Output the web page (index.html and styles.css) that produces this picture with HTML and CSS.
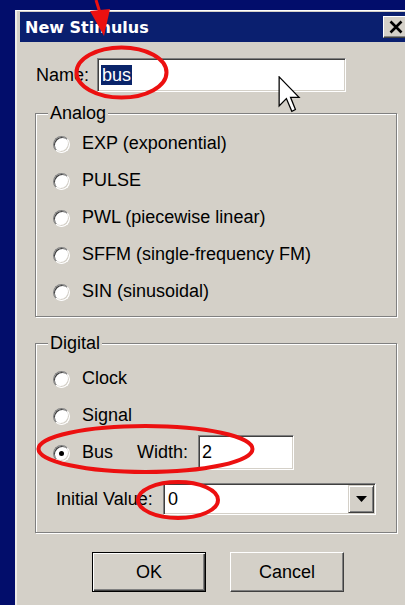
FILE: index.html
```html
<!DOCTYPE html>
<html lang="en">
<head>
<meta charset="utf-8">
<title>New Stimulus</title>
<link rel="stylesheet" href="styles.css">
</head>
<body>
<div class="dialog">
  <div class="titlebar">
    <span class="title">New Stimulus</span>
    <button class="close" type="button" aria-label="Close">
      <svg width="14" height="14" viewBox="0 0 14 14"><path d="M1.5 1.5 L12.5 12.5 M12.5 1.5 L1.5 12.5" stroke="#000" stroke-width="2.6" fill="none"/></svg>
    </button>
  </div>
  <div class="content">
    <div class="name-row">
      <span class="lbl">Name:</span>
      <div class="field name-field"><span class="sel">bus</span></div>
    </div>

    <div class="group analog">
      <span class="legend">Analog</span>
      <div class="opt"><span class="radio"></span><span>EXP (exponential)</span></div>
      <div class="opt"><span class="radio"></span><span>PULSE</span></div>
      <div class="opt"><span class="radio"></span><span>PWL (piecewise linear)</span></div>
      <div class="opt"><span class="radio"></span><span>SFFM (single-frequency FM)</span></div>
      <div class="opt"><span class="radio"></span><span>SIN (sinusoidal)</span></div>
    </div>

    <div class="group digital">
      <span class="legend">Digital</span>
      <div class="opt"><span class="radio"></span><span>Clock</span></div>
      <div class="opt"><span class="radio"></span><span>Signal</span></div>
      <div class="opt"><span class="radio checked"></span><span>Bus</span><span class="w-lbl">Width:</span><div class="field width-field">2</div></div>
      <div class="init-row">
        <span class="init-lbl">Initial Value:</span>
        <div class="combo">
          <span class="combo-val">0</span>
          <span class="combo-btn"><svg width="11" height="6" viewBox="0 0 11 6"><path d="M0 0 H11 L5.5 6 Z" fill="#000"/></svg></span>
        </div>
      </div>
    </div>

    <div class="buttons">
      <button class="btn default" type="button">OK</button>
      <button class="btn" type="button">Cancel</button>
    </div>
  </div>
</div>

<svg class="marks" width="405" height="605" viewBox="0 0 405 605">
  <g stroke="#ec1010" fill="none" stroke-width="4">
    <line x1="96" y1="0" x2="101" y2="16" stroke-width="3"/>
    <ellipse cx="121.5" cy="72.5" rx="45" ry="25"/>
    <ellipse cx="145.5" cy="449" rx="107" ry="23"/>
    <ellipse cx="178" cy="500" rx="40" ry="18"/>
  </g>
  <polygon points="90,11 110,9 104,36" fill="#ec1010"/>
</svg>

<svg class="pointer" width="24" height="38" viewBox="0 0 13 21">
  <path d="M0.5 0.5 L0.5 16.5 L4.5 12.5 L7.5 19.5 L9.5 18.5 L6.8 11.8 L11.5 11.8 Z" fill="#fff" stroke="#000" stroke-width="0.7" stroke-linejoin="miter"/>
</svg>
</body>
</html>
```

FILE: styles.css
```css
html, body {
  margin: 0;
  height: 100%;
}

body {
  position: relative;
  overflow: hidden;
  background: #020d6b;
  font-family: "Liberation Sans", Arial, sans-serif;
  font-size: 18px;
  color: #000;
}

/* dialog window frame */
.dialog {
  margin: 10px 0 0 15px;
  width: 390px;
  height: 620px;
  padding: 1px 0 0 3px;
  background: #d4d0c8;
  border-top: 1px solid #fff;
  border-left: 2px solid #eeece8;
}

.titlebar {
  height: 30px;
  display: flex;
  align-items: center;
  padding-left: 5px;
  background: #0a1f6f;
}

.title {
  font-family: "DejaVu Sans", Verdana, sans-serif;
  font-weight: bold;
  font-size: 16px;
  color: #fff;
}

.close {
  margin: 0 1px 0 auto;
  width: 26px;
  height: 22px;
  padding: 0 0 0 5px;
  display: flex;
  align-items: center;
  background: #d4d0c8;
  border: 1px solid;
  border-color: #fff #404040 #404040 #fff;
  box-shadow: inset -1px -1px #808080;
}

.content {
  padding: 16px 13px 0 15px;
}

/* Name row */
.name-row {
  height: 34px;
  display: flex;
  align-items: center;
}

.lbl {
  width: 61px;
  margin-left: 1px;
}

/* sunken edit field */
.field {
  box-sizing: border-box;
  display: flex;
  align-items: center;
  padding-left: 3px;
  background: #fff;
  border: 1px solid;
  border-color: #808080 #fff #fff #808080;
  box-shadow: inset 1px 1px #404040, inset -1px -1px #d4d0c8;
}

.name-field {
  width: 249px;
  height: 34px;
}

.sel {
  padding: 0 1px;
  line-height: 20px;
  background: #0a246a;
  color: #fff;
}

/* etched group boxes */
.group {
  position: relative;
  border: 1px solid #808080;
  box-shadow: inset 1px 1px #fff, 1px 1px #fff;
}

.legend {
  position: absolute;
  top: -11px;
  left: 12px;
  padding: 0 2px;
  line-height: 20px;
  background: #d4d0c8;
}

.analog {
  margin-top: 21px;
  padding: 11px 0 6px 17px;
}

.digital {
  margin-top: 26px;
  padding: 16px 20px 17px 17px;
}

.opt {
  height: 37px;
  display: flex;
  align-items: center;
}

.radio {
  position: relative;
  box-sizing: border-box;
  width: 17px;
  height: 17px;
  margin: 2px 12px 0 0;
  border-radius: 50%;
  background: #fff;
  border: 1px solid;
  border-color: #808080 #fff #fff #808080;
  box-shadow: inset 1px 1px #404040, inset -1px -1px #d4d0c8;
}

.radio.checked::after {
  content: "";
  position: absolute;
  left: 5px;
  top: 5px;
  width: 5px;
  height: 5px;
  border-radius: 50%;
  background: #000;
}

.w-lbl {
  margin-left: 24px;
}

.width-field {
  width: 96px;
  height: 35px;
  margin-left: 10px;
}

/* Initial value combo box */
.init-row {
  height: 32px;
  margin-top: 12px;
  display: flex;
  align-items: center;
}

.init-lbl {
  margin-left: 3px;
}

.combo {
  box-sizing: border-box;
  width: 213px;
  height: 32px;
  margin-left: auto;
  padding: 1px;
  display: flex;
  align-items: center;
  background: #fff;
  border: 1px solid;
  border-color: #808080 #fff #fff #808080;
  box-shadow: inset 1px 1px #404040, inset -1px -1px #d4d0c8;
}

.combo-val {
  flex: 1;
  padding-left: 3px;
}

.combo-btn {
  box-sizing: border-box;
  width: 26px;
  height: 28px;
  display: flex;
  align-items: center;
  justify-content: center;
  background: #d4d0c8;
  border: 1px solid;
  border-color: #d4d0c8 #404040 #404040 #d4d0c8;
  box-shadow: inset 1px 1px #fff, inset -1px -1px #808080;
}

/* dialog buttons */
.buttons {
  display: flex;
  gap: 24px;
  margin: 19px 0 0 57px;
}

.btn {
  box-sizing: border-box;
  width: 114px;
  height: 40px;
  padding: 0;
  font: inherit;
  color: #000;
  background: #d4d0c8;
  border: 1px solid;
  border-color: #fff #404040 #404040 #fff;
  box-shadow: inset -1px -1px #808080;
}

.btn.default {
  border-color: #000;
  box-shadow: inset 1px 1px #fff, inset -1px -1px #404040, inset -2px -2px #808080;
}

/* annotation layer and mouse pointer */
.marks {
  position: absolute;
  left: 0;
  top: 0;
  pointer-events: none;
}

.pointer {
  position: absolute;
  left: 278px;
  top: 76px;
  pointer-events: none;
}
```
